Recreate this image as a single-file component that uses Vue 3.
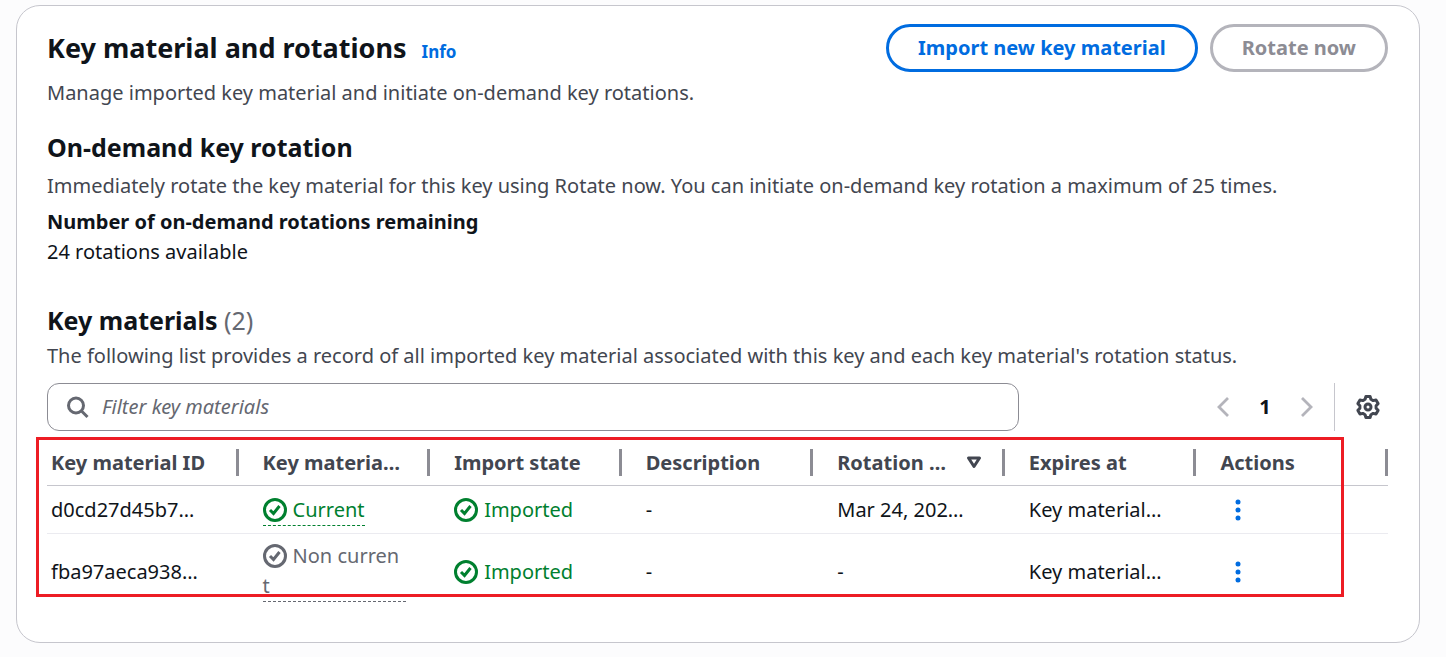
<script setup>
import { ref } from 'vue'

const filter = ref('')
const columns = [
  { key: 'id', label: 'Key material ID' },
  { key: 'state', label: 'Key materia…' },
  { key: 'imported', label: 'Import state' },
  { key: 'description', label: 'Description' },
  { key: 'rotation', label: 'Rotation …', sorted: true },
  { key: 'expires', label: 'Expires at' },
  { key: 'actions', label: 'Actions' },
]
const rows = [
  { id: 'd0cd27d45b7…', state: 'Current', current: true, imported: 'Imported', description: '-', rotation: 'Mar 24, 202…', expires: 'Key material…' },
  { id: 'fba97aeca938…', state: 'Non current', current: false, imported: 'Imported', description: '-', rotation: '-', expires: 'Key material…' },
]
</script>

<template>
  <main class="card">
    <header class="head">
      <h1>Key material and rotations <a href="#info" class="info">Info</a></h1>
      <div class="buttons">
        <button type="button" class="btn primary">Import new key material</button>
        <button type="button" class="btn" disabled>Rotate now</button>
      </div>
    </header>
    <p class="lead">Manage imported key material and initiate on-demand key rotations.</p>

    <section class="rotation">
      <h2>On-demand key rotation</h2>
      <p>Immediately rotate the key material for this key using Rotate now. You can initiate on-demand key rotation a maximum of 25 times.</p>
      <dl>
        <dt>Number of on-demand rotations remaining</dt>
        <dd>24 rotations available</dd>
      </dl>
    </section>

    <section class="materials">
      <h2>Key materials <span class="count">(2)</span></h2>
      <p>The following list provides a record of all imported key material associated with this key and each key material's rotation status.</p>

      <div class="toolbar">
        <label class="search">
          <svg viewBox="0 0 24 24" width="24" height="24" fill="none" stroke="currentColor" stroke-width="3">
            <circle cx="10" cy="10.5" r="7.5" />
            <path d="M15.500 16l6 6" />
          </svg>
          <input v-model="filter" type="text" placeholder="Filter key materials" aria-label="Filter key materials" />
        </label>
        <nav class="pager" aria-label="Pagination">
          <button type="button" class="icon-btn arrow" aria-label="Previous page" disabled>
            <svg viewBox="0 0 12 20" width="12" height="20" fill="none" stroke="currentColor" stroke-width="2.8"><path d="M11 1L2 10l9 9" /></svg>
          </button>
          <button type="button" class="icon-btn page" aria-current="page">1</button>
          <button type="button" class="icon-btn arrow" aria-label="Next page" disabled>
            <svg viewBox="0 0 12 20" width="12" height="20" fill="none" stroke="currentColor" stroke-width="2.8"><path d="M1 1l9 9-9 9" /></svg>
          </button>
          <span class="rule"></span>
          <button type="button" class="icon-btn gear" aria-label="Preferences">
            <svg viewBox="0 0 24 24" width="24" height="24" fill="none" stroke="currentColor" stroke-width="3" stroke-linejoin="round">
              <path d="M9.900 1.500H14.100L14.900 4.300L17.200 5.600L20 5L22.100 8.600L20.100 10.700V13.300L22.100 15.400L20 19L17.200 18.400L14.900 19.700L14.100 22.500H9.900L9.100 19.700L6.800 18.400L4 19L1.900 15.400L3.900 13.300V10.700L1.900 8.600L4 5L6.800 5.600L9.100 4.300Z" />
              <circle cx="12" cy="12" r="3" />
            </svg>
          </button>
        </nav>
      </div>

      <div class="table-wrap">
        <table>
          <thead>
            <tr>
              <th v-for="c in columns" :key="c.key" scope="col">
                <div class="th">
                  <span>{{ c.label }}</span>
                  <svg v-if="c.sorted" viewBox="0 0 16 13" width="16" height="13" fill="none" stroke="currentColor" stroke-width="3" stroke-linejoin="round"><path d="M2.500 2h11L8 10.500z" /></svg>
                </div>
              </th>
            </tr>
          </thead>
          <tbody>
            <tr v-for="r in rows" :key="r.id">
              <td>{{ r.id }}</td>
              <td class="state">
                <span class="status dashed" :class="r.current ? 'ok' : 'idle'">
                  <svg class="check" viewBox="0 0 24 24" width="24" height="24" fill="none" stroke="currentColor" stroke-width="3"><circle cx="12" cy="12" r="10.500" /><path d="M7 12l3.500 3.500L16.500 8" /></svg>{{ r.state }}</span>
              </td>
              <td>
                <span class="status ok">
                  <svg class="check" viewBox="0 0 24 24" width="24" height="24" fill="none" stroke="currentColor" stroke-width="3"><circle cx="12" cy="12" r="10.500" /><path d="M7 12l3.500 3.500L16.500 8" /></svg>{{ r.imported }}</span>
              </td>
              <td>{{ r.description }}</td>
              <td>{{ r.rotation }}</td>
              <td>{{ r.expires }}</td>
              <td>
                <button type="button" class="icon-btn dots" aria-label="Actions">
                  <svg viewBox="0 0 6 22" width="6" height="22" fill="currentColor"><circle cx="3" cy="3" r="2.500" /><circle cx="3" cy="11" r="2.500" /><circle cx="3" cy="19" r="2.500" /></svg>
                </button>
              </td>
            </tr>
          </tbody>
        </table>
        <div class="highlight"></div>
      </div>
    </section>
  </main>
</template>

<style>
body {
  background: #fcfcfd;
}
</style>

<style scoped>
.card {
  box-sizing: border-box;
  margin: 5px 26px 13px 16px;
  padding: 18px 31px 34px 30px;
  border: 1px solid #c6c6cd;
  border-radius: 24px;
  background: #fff;
  color: #0f141a;
  font: 20px/30px "Noto Sans", "Open Sans", sans-serif;
}
h1, h2, p, dl, dd {
  margin: 0;
}
.head {
  display: flex;
  justify-content: space-between;
  align-items: center;
}
h1 {
  padding-top: 3px;
  font-size: 27px;
  line-height: 36px;
  font-weight: 700;
}
.info {
  margin-left: 8px;
  font-size: 17px;
  color: #006ce0;
  text-decoration: none;
}
.buttons {
  display: flex;
  gap: 12px;
}
.btn {
  height: 48px;
  padding: 0 29px;
  border: 3px solid #b4b4bb;
  border-radius: 24px;
  background: #fff;
  color: #8c8c94;
  font: inherit;
  font-weight: 700;
}
.btn.primary {
  border-color: #006ce0;
  color: #006ce0;
}
p {
  color: #424650;
}
.lead {
  margin-top: 6px;
}
h2 {
  font-size: 25px;
  line-height: 30px;
  font-weight: 700;
}
.rotation {
  margin-top: 24px;
}
.rotation p {
  margin-top: 9px;
}
dl {
  margin-top: 6px;
}
dt {
  font-weight: 700;
}
.materials {
  margin-top: 38px;
}
.materials p {
  margin-top: 6px;
}
.count {
  color: #656871;
  font-weight: 400;
}
.toolbar {
  display: flex;
  justify-content: space-between;
  align-items: center;
  margin-top: 12px;
}
.search {
  box-sizing: border-box;
  display: flex;
  align-items: center;
  gap: 12px;
  width: 972px;
  max-width: 73%;
  height: 48px;
  padding: 0 18px;
  border: 1px solid #8c8c94;
  border-radius: 12px;
  color: #656871;
}
.search input {
  flex: 1;
  min-width: 0;
  padding: 0;
  border: 0;
  outline: 0;
  background: none;
  color: #0f141a;
  font: inherit;
}
.search input::placeholder {
  color: #656871;
  font-style: italic;
  opacity: 1;
}
.pager {
  display: flex;
  align-items: center;
}
.icon-btn {
  display: flex;
  align-items: center;
  justify-content: center;
  padding: 0;
  border: 0;
  background: none;
  color: #424650;
  font: inherit;
}
.arrow {
  width: 24px;
  color: #b4b4bb;
}
.page {
  width: 60px;
  color: #0f141a;
  font-weight: 700;
}
.rule {
  width: 1px;
  height: 48px;
  margin: 0 21px 0 15px;
  background: #c6c6cd;
}
.gear {
  margin-right: 8px;
}
.table-wrap {
  position: relative;
  margin-top: 9px;
}
.highlight {
  position: absolute;
  inset: -3px 44px 11px -11px;
  border: 3px solid #ed1c24;
  pointer-events: none;
}
table {
  width: 100%;
  table-layout: fixed;
  border-collapse: separate;
  border-spacing: 0;
}
th {
  height: 45px;
  padding: 0;
  border-bottom: 1px solid #c6c6cd;
  color: #424650;
  text-align: left;
}
.th {
  display: flex;
  align-items: center;
  justify-content: space-between;
  height: 27px;
  padding: 0 20px 0 24px;
  border-right: 3px solid #8c8c94;
  white-space: nowrap;
}
td {
  padding: 9px 32px 8px 24px;
  border-bottom: 1px solid #ebebf0;
  white-space: nowrap;
}
th:first-child .th,
td:first-child {
  padding-left: 4px;
}
td:first-child {
  padding-right: 0;
}
tbody tr:last-child td {
  border-bottom: 0;
}
td.state {
  padding: 8px 24px 6px;
}
tbody tr:last-child td.state {
  padding-top: 7px;
}
.status.dashed {
  display: inline-block;
  border-bottom: 1px dashed;
  white-space: normal;
  word-break: break-all;
}
.ok {
  color: #00802f;
}
.idle {
  color: #656871;
}
.check {
  margin-right: 6px;
  vertical-align: -5px;
}
.dots {
  width: 36px;
  height: 30px;
  color: #006ce0;
}
</style>
